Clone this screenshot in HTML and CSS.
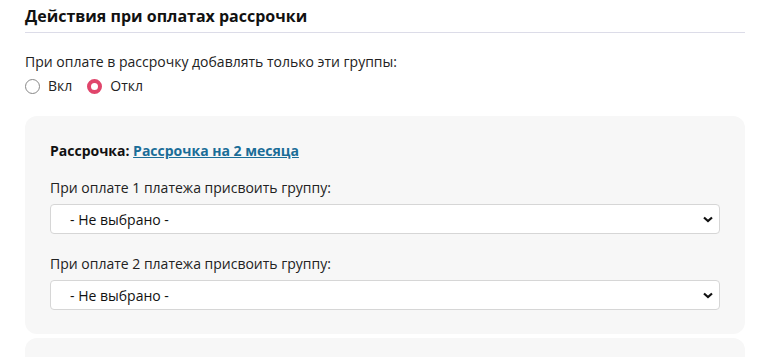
FILE: index.html
```
<!DOCTYPE html>
<html lang="ru">
<head>
    <meta charset="UTF-8">
    <meta name="viewport" content="width=device-width, initial-scale=1.0">
    <title>Действия при оплатах рассрочки</title>
    <link rel="stylesheet" href="styles.css">
</head>
<body>

<h2 class="title">Действия при оплатах рассрочки</h2>

<div class="option">
    <div class="option-label">При оплате в рассрочку добавлять только эти группы:</div>
    <div class="radios">
        <label class="radio"><input type="radio" name="onlyGroups" value="1"> <span>Вкл</span></label>
        <label class="radio"><input type="radio" name="onlyGroups" value="0" checked> <span>Откл</span></label>
    </div>
</div>

<div class="card">
    <div class="card-title">Рассрочка: <a href="#">Рассрочка на 2 месяца</a></div>

    <div class="field">
        <label for="group1">При оплате 1 платежа присвоить группу:</label>
        <select id="group1">
            <option value="">- Не выбрано -</option>
        </select>
    </div>

    <div class="field">
        <label for="group2">При оплате 2 платежа присвоить группу:</label>
        <select id="group2">
            <option value="">- Не выбрано -</option>
        </select>
    </div>
</div>

<div class="card card-next"></div>

</body>
</html>
```

FILE: styles.css
```
body {
    font-family: "Open Sans", Arial, sans-serif;
    font-size: 14px;
    color: #222;
    margin: 0;
    padding: 0 23px 0 25px;
}
.title {
    font-size: 16px;
    font-weight: bold;
    color: #111;
    margin: 5px 0 0;
    padding-bottom: 5px;
    border-bottom: 1px solid #dcdce8;
}
.option {
    margin-top: 19px;
}
.option-label {
    line-height: 20px;
}
.radios {
    display: flex;
    gap: 15px;
    margin-top: 4px;
}
.radio {
    display: flex;
    align-items: center;
    gap: 8px;
    line-height: 20px;
}
.radio input {
    appearance: none;
    margin: 0;
    width: 15px;
    height: 15px;
    border: 1px solid #888;
    border-radius: 50%;
    background: #fff;
}
.radio input:checked {
    border: 4px solid #e0456b;
    background: #fff;
}
.card {
    background: #f7f7f7;
    border-radius: 12px;
    padding: 25px 25px 24px;
    margin-top: 20px;
}
.card + .card {
    margin-top: 4px;
}
.card-next {
    min-height: 40px;
}
.card-title {
    font-weight: bold;
    color: #111;
    line-height: 20px;
}
.card-title a {
    color: #1a6d98;
}
.field {
    margin-top: 17px;
}
.field label {
    display: block;
    line-height: 20px;
    margin-bottom: 6px;
}
select {
    appearance: none;
    display: block;
    width: 100%;
    height: 30px;
    padding: 0 30px 0 19px;
    font-family: inherit;
    font-size: 14px;
    color: #111;
    background: #fff url("data:image/svg+xml,%3Csvg xmlns='http://www.w3.org/2000/svg' width='10' height='7' viewBox='0 0 10 7'%3E%3Cpath d='M1 1.5l4 3.5 4-3.5' fill='none' stroke='%23111' stroke-width='2.2'/%3E%3C/svg%3E") no-repeat right 6px center;
    border: 1px solid #d6d6d6;
    border-radius: 4px;
}
.field + .field {
    margin-top: 20px;
}
```
